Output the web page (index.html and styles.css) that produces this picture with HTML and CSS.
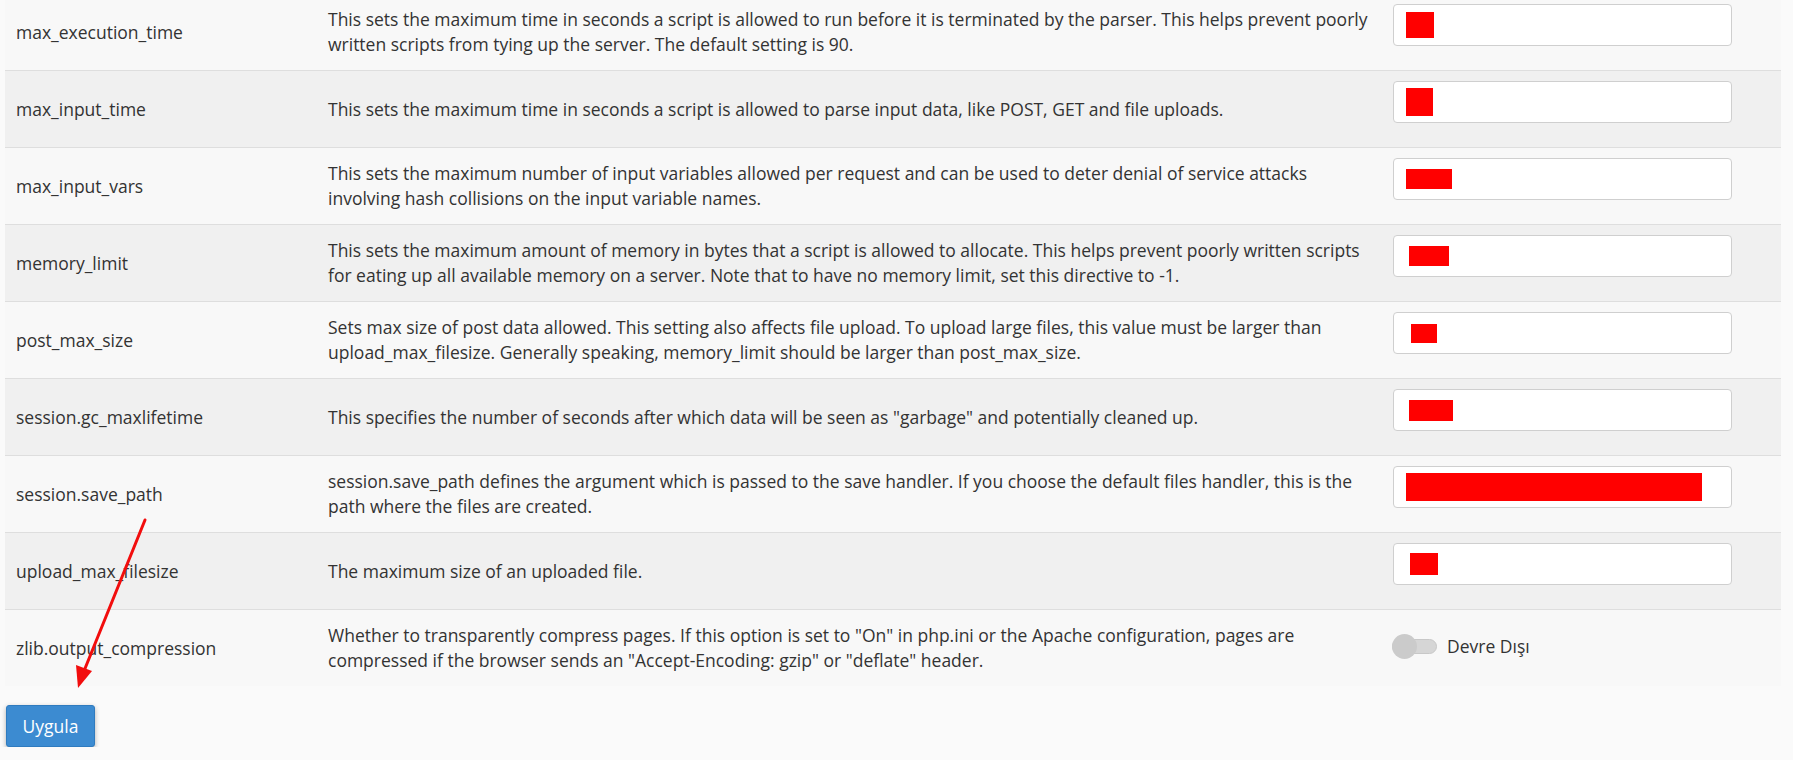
FILE: index.html
```html
<!DOCTYPE html>
<html lang="tr">
  <head>
    <meta charset="utf-8" />
    <meta name="viewport" content="width=device-width" />
    <title>PHP INI Editor</title>
    <link rel="stylesheet" href="styles.css">
  </head>
  <body>
    <form class="ini-form">
      <div class="settings">
        <div class="setting">
          <div class="setting-name">max_execution_time</div>
          <div class="setting-desc">This sets the maximum time in seconds a script is allowed to run before it is terminated by the parser. This helps prevent poorly written scripts from tying up the server. The default setting is 90.</div>
          <div class="setting-value"><div class="field"><span class="mask" style="width: 28px; height: 26px"></span></div></div>
        </div>
        <div class="setting">
          <div class="setting-name">max_input_time</div>
          <div class="setting-desc">This sets the maximum time in seconds a script is allowed to parse input data, like POST, GET and file uploads.</div>
          <div class="setting-value"><div class="field"><span class="mask" style="width: 27px; height: 28px"></span></div></div>
        </div>
        <div class="setting">
          <div class="setting-name">max_input_vars</div>
          <div class="setting-desc">This sets the maximum number of input variables allowed per request and can be used to deter denial of service attacks involving hash collisions on the input variable names.</div>
          <div class="setting-value"><div class="field"><span class="mask" style="width: 46px; height: 20px"></span></div></div>
        </div>
        <div class="setting">
          <div class="setting-name">memory_limit</div>
          <div class="setting-desc">This sets the maximum amount of memory in bytes that a script is allowed to allocate. This helps prevent poorly written scripts for eating up all available memory on a server. Note that to have no memory limit, set this directive to -1.</div>
          <div class="setting-value"><div class="field"><span class="mask" style="width: 40px; height: 20px; margin-left: 3px"></span></div></div>
        </div>
        <div class="setting">
          <div class="setting-name">post_max_size</div>
          <div class="setting-desc">Sets max size of post data allowed. This setting also affects file upload. To upload large files, this value must be larger than upload_max_filesize. Generally speaking, memory_limit should be larger than post_max_size.</div>
          <div class="setting-value"><div class="field"><span class="mask" style="width: 26px; height: 19px; margin-left: 5px"></span></div></div>
        </div>
        <div class="setting">
          <div class="setting-name">session.gc_maxlifetime</div>
          <div class="setting-desc">This specifies the number of seconds after which data will be seen as "garbage" and potentially cleaned up.</div>
          <div class="setting-value"><div class="field"><span class="mask" style="width: 44px; height: 21px; margin-left: 3px"></span></div></div>
        </div>
        <div class="setting">
          <div class="setting-name">session.save_path</div>
          <div class="setting-desc">session.save_path defines the argument which is passed to the save handler. If you choose the default files handler, this is the path where the files are created.</div>
          <div class="setting-value"><div class="field"><span class="mask" style="width: 296px; height: 28px"></span></div></div>
        </div>
        <div class="setting">
          <div class="setting-name">upload_max_filesize</div>
          <div class="setting-desc">The maximum size of an uploaded file.</div>
          <div class="setting-value"><div class="field"><span class="mask" style="width: 28px; height: 22px; margin-left: 4px"></span></div></div>
        </div>
        <div class="setting">
          <div class="setting-name">zlib.output_compression</div>
          <div class="setting-desc">Whether to transparently compress pages. If this option is set to "On" in php.ini or the Apache configuration, pages are compressed if the browser sends an "Accept-Encoding: gzip" or "deflate" header.</div>
          <div class="setting-value setting-toggle">
            <span class="switch"><span class="knob"></span></span>
            <span class="switch-label">Devre Dışı</span>
          </div>
        </div>
      </div>
      <div class="actions">
        <button type="button" class="btn-primary">Uygula</button>
      </div>
    </form>

    <!-- pointer to the apply button -->
    <svg class="pointer" width="1793" height="760" viewBox="0 0 1793 760">
      <line x1="145" y1="520" x2="84" y2="671" stroke="#f20d0d" stroke-width="3" stroke-linecap="round" />
      <polygon points="78,688 92,671 76,665" fill="#f20d0d" />
    </svg>
  </body>
</html>
```

FILE: styles.css
```css
html,
body {
  margin: 0;
  padding: 0;
  background-color: #fafafa;
  font: 400 17.5px/25px "Open Sans", "Noto Sans", sans-serif;
  color: #333;
  overflow: hidden;
}
.ini-form {
  padding: 0 12px 0 5px;
  margin-top: -7px;
}
.settings {
  width: 1776px;
}
.setting {
  display: grid;
  grid-template-columns: 311px 1065px 400px;
  height: 77px;
  box-sizing: border-box;
  border-top: 1px solid #dedede;
  background-color: #f8f8f8;
}
.setting:nth-child(even) {
  background-color: #f0f0f0;
}
.setting:first-child {
  border-top-color: transparent;
}
.setting-name,
.setting-desc {
  display: flex;
  align-items: center;
}
.setting-name {
  padding-left: 11px;
}
.setting-desc {
  padding: 0 12px;
}
.setting-value {
  padding: 10px 12px 0;
}
.field {
  display: flex;
  align-items: center;
  width: 339px;
  height: 42px;
  box-sizing: border-box;
  padding-left: 12px;
  background-color: #fff;
  border: 1px solid #cfcfcf;
  border-radius: 4px;
}
.mask {
  display: block;
  background-color: #f00;
}
.setting-toggle {
  display: flex;
  align-items: center;
  gap: 10px;
  padding: 0 12px 4px 11px;
}
.switch {
  position: relative;
  width: 45px;
  height: 15px;
  box-sizing: border-box;
  background-color: #d6d6d6;
  border: 1px solid #c8c8c8;
  border-radius: 8px;
}
.knob {
  position: absolute;
  left: -1px;
  top: -6px;
  width: 25px;
  height: 25px;
  border-radius: 50%;
  background-color: #cbcbcb;
}
.actions {
  padding: 19px 0 0 1px;
}
.btn-primary {
  width: 89px;
  height: 42px;
  padding: 0;
  font: 400 17.5px "Open Sans", "Noto Sans", sans-serif;
  color: #fff;
  background-color: #3c8bd1;
  border: 1px solid #2f7bbf;
  border-radius: 3px;
  box-shadow: 0 2px 5px rgba(0, 0, 0, 0.3);
}
.pointer {
  position: absolute;
  left: 0;
  top: 0;
  pointer-events: none;
}
```
